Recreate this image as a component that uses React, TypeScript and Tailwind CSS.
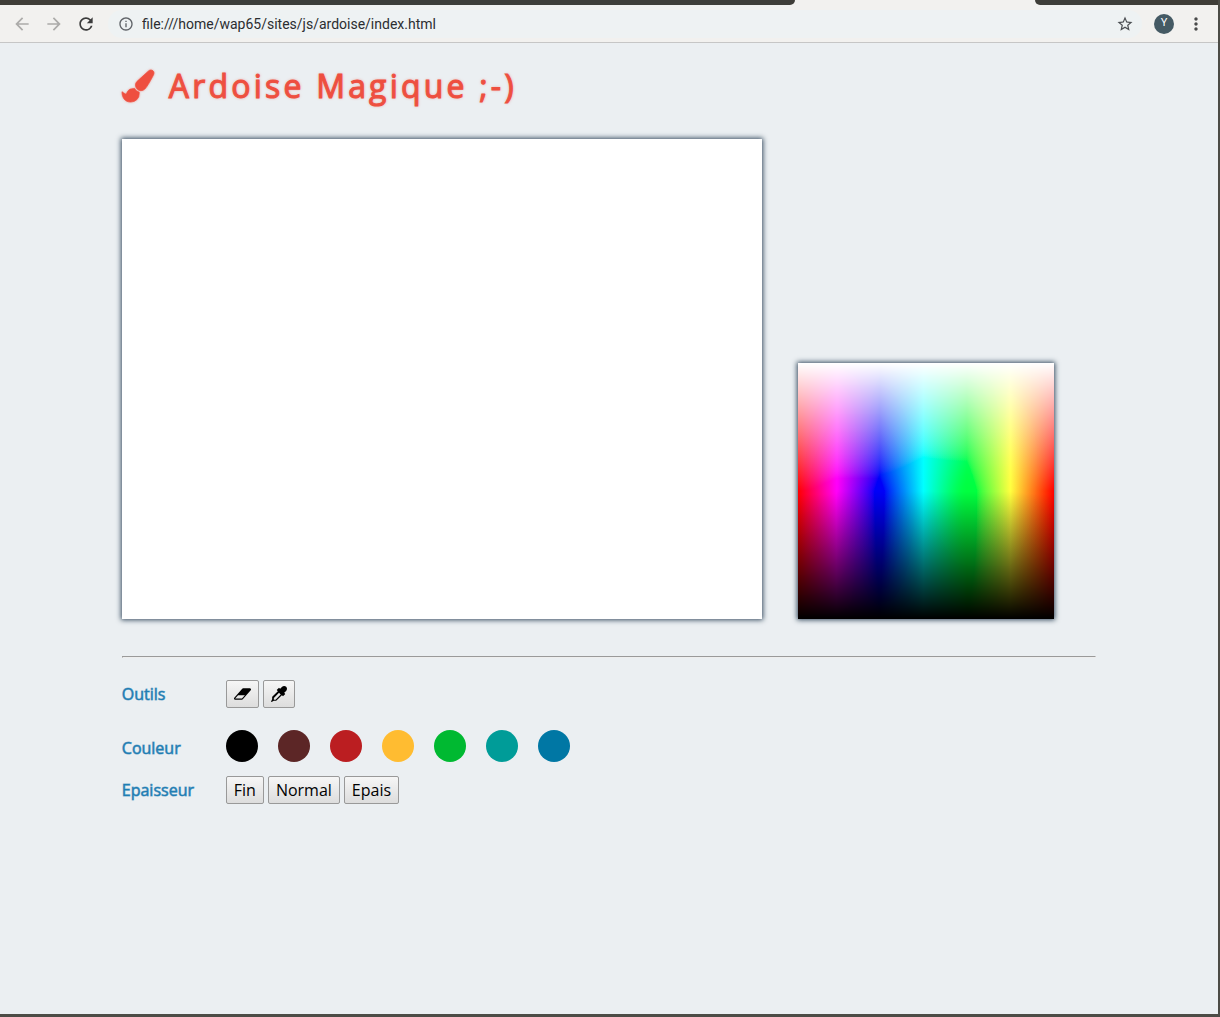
import type { ReactNode } from 'react';
import { MdArrowBack, MdArrowForward, MdInfoOutline, MdMoreVert, MdRefresh, MdStarBorder } from 'react-icons/md';

const colors = [
  { name: 'Noir', className: 'bg-black' },
  { name: 'Marron', className: 'bg-[#5c2626]' },
  { name: 'Rouge', className: 'bg-[#bb1e21]' },
  { name: 'Jaune', className: 'bg-[#ffbc31]' },
  { name: 'Vert', className: 'bg-[#00b931]' },
  { name: 'Turquoise', className: 'bg-[#009c98]' },
  { name: 'Bleu', className: 'bg-[#0077a4]' },
];

function BrushIcon() {
  return (
    <svg viewBox="0 0 1792 1792" className="size-8 shrink-0 overflow-visible drop-shadow-[0_0_1px_#f04f4080]" fill="currentColor" stroke="currentColor" strokeWidth="40" aria-hidden="true">
      <path d="M1615 0q70 0 122.5 46.5t52.5 116.5q0 63-45 151-332 629-465 752-97 91-218 91-126 0-216.5-92.5t-90.5-219.5q0-128 92-212l638-579q59-54 130-54zm-909 1034q39 76 106.5 130t150.5 76l1 71q4 213-129.5 347t-348.5 134q-123 0-218-46.5t-152.5-127.5-86.5-183-29-220q7 5 41 30t62 44.5 59 36.5 46 17q41 0 55-37 25-66 57.5-112.5t69.5-76 88-47.5 103-25.5 125-10.5z" />
    </svg>
  );
}

function EraserIcon() {
  return (
    <svg viewBox="0 0 1920 1792" className="h-4 w-[17px]" fill="currentColor" aria-hidden="true">
      <path d="M896 1408l336-384h-768l-336 384h768zm1013-1077q15 34 9.5 71.5t-30.5 65.5l-896 1024q-38 44-96 44h-768q-38 0-69.5-20.5t-47.5-54.5q-15-34-9.5-71.5t30.5-65.5l896-1024q38-44 96-44h768q38 0 69.5 20.5t47.5 54.5z" />
    </svg>
  );
}

function DropperIcon() {
  return (
    <svg viewBox="0 0 1792 1792" className="size-4" fill="currentColor" aria-hidden="true">
      <path d="M1698 94q94 94 94 226.5t-94 225.5l-225 223 104 104q10 10 10 23t-10 23l-210 210q-10 10-23 10t-23-10l-105-105-603 603q-37 37-90 37h-203l-256 128-64-64 128-256v-203q0-53 37-90l603-603-105-105q-10-10-10-23t10-23l210-210q10-10 23-10t23 10l104 104 223-225q93-94 225.5-94t226.5 94zm-1186 1442l576-576-192-192-576 576v192h192z" />
    </svg>
  );
}

function ToolButton({ label, children }: { label?: string; children: ReactNode }) {
  return (
    <button
      type="button"
      aria-label={label}
      className="flex h-7 items-center rounded-xs border border-[#999] bg-linear-to-b from-[#f6f6f6] to-[#dddddd] px-[7px] text-base text-black"
    >
      {children}
    </button>
  );
}

function Row({ label, className = '', children }: { label: string; className?: string; children: ReactNode }) {
  return (
    <div role="group" aria-label={label} className={'flex items-center ' + className}>
      <span className="w-26 shrink-0 text-base text-[#1f7db3] [-webkit-text-stroke:1px_#1f7db399]">{label}</span>
      {children}
    </div>
  );
}

function BrowserBar() {
  return (
    <header className="border-b border-[#c6c6c6] bg-[#f2f1ef]">
      <div className="flex h-[5px]">
        <div className="w-[795px] rounded-br-md bg-[#3f3d38]" />
        <div className="w-60" />
        <div className="flex-1 rounded-bl-md bg-[#3f3d38]" />
      </div>
      <div className="flex h-[37px] items-center">
        <div className="flex items-center gap-3 pl-3">
          <button type="button" aria-label="Précédent" className="text-[#acaba9]"><MdArrowBack size={20} /></button>
          <button type="button" aria-label="Suivant" className="text-[#acaba9]"><MdArrowForward size={20} /></button>
          <button type="button" aria-label="Actualiser" className="text-[#3c3c3c]"><MdRefresh size={20} /></button>
        </div>
        <div className="ml-3 flex h-7 flex-1 items-center gap-2 rounded-full bg-[#eef2f3] pr-2 pl-2.5">
          <MdInfoOutline size={16} className="text-[#5f6368]" />
          <input
            aria-label="Adresse"
            defaultValue="file:///home/wap65/sites/js/ardoise/index.html"
            className="min-w-0 flex-1 bg-transparent font-[Roboto,sans-serif] text-sm text-[#2b2d30] outline-none"
          />
          <button type="button" aria-label="Favori" className="text-[#4c4f53]"><MdStarBorder size={18} /></button>
        </div>
        <button type="button" aria-label="Profil" className="ml-3 size-5 rounded-full bg-[#455a64] font-[Roboto,sans-serif] text-[11px] text-white">Y</button>
        <button type="button" aria-label="Menu" className="mr-3 ml-3 text-[#4a4a4a]"><MdMoreVert size={20} /></button>
      </div>
    </header>
  );
}

export default function App() {
  return (
    <div className="flex min-h-screen flex-col border-r-2 border-b-3 border-[#4c4c46] bg-[#ebeff2] font-['Open_Sans',sans-serif]">
      <BrowserBar />
      <main className="mx-auto w-4/5">
        <h1 className="flex items-center gap-[15px] pt-[21px] pb-[3px] text-[32px] leading-11 tracking-widest text-[#ee4f40] [-webkit-text-stroke:1px_#ee4f40] text-shadow-[0_0_3px_#ee4f4099]">
          <BrushIcon />
          Ardoise Magique ;-)
        </h1>

        <div className="mt-7 flex items-end gap-9">
          <canvas aria-label="Ardoise" width={640} height={480} className="bg-white shadow-[0_0_5px_1px_#34495e]" />
          <div className="size-64 shadow-[0_0_5px_1px_#34495e]">
            <svg className="absolute size-0" aria-hidden="true">
              <filter id="display-profile">
                <feColorMatrix values="1.06 -.045 -.015 0 0  0 1.01 -.01 0 0  0 .05 .95 0 0  0 0 0 1 0" />
              </filter>
            </svg>
            <button
              type="button"
              aria-label="Palette de couleurs"
              className="block size-full cursor-crosshair bg-[linear-gradient(to_bottom,#fff_0%,#fff0_50%,#0000_50%,#000_100%),linear-gradient(to_right,#f00_0%,#f0f_15%,#00f_32%,#0ff_49%,#0f0_66%,#ff0_83%,#f00_100%)] [filter:url(#display-profile)]"
            />
          </div>
        </div>

        <hr className="mt-[37px] h-0.5 border border-[#eee] border-t-[#9a9a9a] border-l-[#9a9a9a]" />

        <div className="mt-[22px] flex flex-col">
          <Row label="Outils">
            <div className="flex gap-1">
              <ToolButton label="Gomme"><EraserIcon /></ToolButton>
              <ToolButton label="Pipette"><DropperIcon /></ToolButton>
            </div>
          </Row>
          <Row label="Couleur" className="pt-[22px] pb-2.5">
            <div className="flex gap-5 pb-1">
              {colors.map((color) => (
                <button key={color.name} type="button" aria-label={color.name} className={'size-8 rounded-full ' + color.className} />
              ))}
            </div>
          </Row>
          <Row label="Epaisseur">
            <div className="flex gap-1">
              <ToolButton>Fin</ToolButton>
              <ToolButton>Normal</ToolButton>
              <ToolButton>Epais</ToolButton>
            </div>
          </Row>
        </div>
      </main>
    </div>
  );
}
